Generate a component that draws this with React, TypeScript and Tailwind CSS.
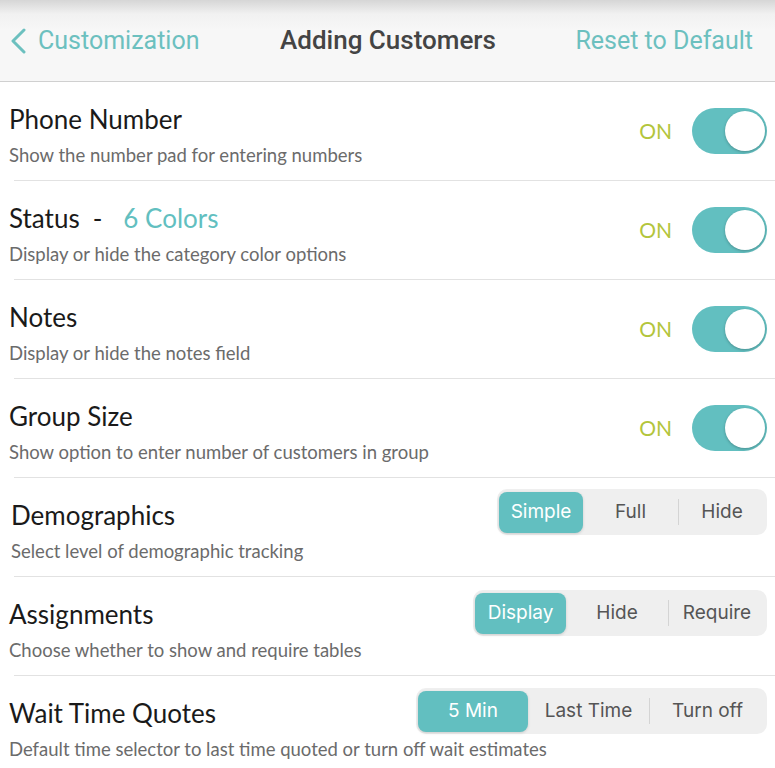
import React from "react";

type ToggleRow = {
  title: React.ReactNode;
  sub: string;
};

type SegRow = {
  title: string;
  sub: string;
  options: string[];
  widths: number[];
  top: string;
  titleInset?: string;
};

const toggles: ToggleRow[] = [
  { title: "Phone Number", sub: "Show the number pad for entering numbers" },
  {
    title: (
      <>
        Status<span className="ml-[13px]">-</span>
        <span className="ml-[21px] text-[#62bfc0]">6 Colors</span>
      </>
    ),
    sub: "Display or hide the category color options",
  },
  { title: "Notes", sub: "Display or hide the notes field" },
  { title: "Group Size", sub: "Show option to enter number of customers in group" },
];

const segs: SegRow[] = [
  { title: "Demographics", sub: "Select level of demographic tracking", options: ["Simple", "Full", "Hide"], widths: [84, 95, 86], top: "mt-[11px]", titleInset: "pl-[11px]" },
  { title: "Assignments", sub: "Choose whether to show and require tables", options: ["Display", "Hide", "Require"], widths: [91, 102, 96], top: "mt-[13px]" },
  { title: "Wait Time Quotes", sub: "Default time selector to last time quoted or turn off wait estimates", options: ["5 Min", "Last Time", "Turn off"], widths: [110, 121, 115], top: "mt-[12px]" },
];

function Switch() {
  return (
    <div className="relative h-[46px] w-[75px] rounded-full bg-[#62bfc0]">
      <div className="absolute right-[2px] top-[3px] h-[40px] w-[40px] rounded-full bg-white shadow-[0_1px_3px_rgba(0,0,0,0.25)]" />
    </div>
  );
}

function Segmented({ options, widths }: { options: string[]; widths: number[] }) {
  return (
    <div className="flex h-[46px] items-center rounded-[10px] bg-[#efefef] p-[2px] font-['Inter',sans-serif] text-[19px] text-[#555]">
      {options.map((o, i) => (
        <React.Fragment key={o}>
          {i === 2 && <div className="h-[26px] w-px bg-[#d4d4d4]" />}
          <div
            style={{ width: widths[i] }}
            className={
              i === 0
                ? "flex h-[41px] items-center justify-center rounded-[8px] bg-[#62bfc0] text-white shadow-[0_1px_3px_rgba(0,0,0,0.15)]"
                : "flex h-[41px] items-center justify-center"
            }
          >
            {o}
          </div>
        </React.Fragment>
      ))}
    </div>
  );
}

function RowText({ title, sub, inset }: { title: React.ReactNode; sub: string; inset?: string }) {
  return (
    <div className={`flex min-w-0 flex-1 flex-col self-start whitespace-nowrap pt-[22px] pl-[9px] ${inset ?? ""}`}>
      <div className="text-[26px] leading-[30px] text-[#1a1a1a]">{title}</div>
      <div className="mt-[10px] text-[18.5px] leading-[22px] text-[#6b6b6b]">{sub}</div>
    </div>
  );
}

export default function App() {
  return (
    <div className="h-[768px] w-[775px] overflow-hidden bg-white font-['Lato',sans-serif]">
      <header className="flex h-[82px] items-center border-b border-[#d0d0d0] bg-[linear-gradient(#d6d6d6_0px,#f1f1f1_14px,#f7f7f7_30px)] font-['Roboto',sans-serif] text-[25px]">
        <div className="flex w-[260px] items-center pl-[10px] text-[#6cc0bf]">
          <svg width="17" height="26" viewBox="0 0 17 26" fill="none">
            <path d="M14 2 L3 13 L14 24" stroke="#6cc0bf" strokeWidth="3" strokeLinecap="round" strokeLinejoin="round" />
          </svg>
          <span className="ml-[11px]">Customization</span>
        </div>
        <div className="flex-1 pl-[20px] text-[26px] font-medium text-[#444]">Adding Customers</div>
        <div className="pr-[22px] text-[#6cc0bf]">Reset to Default</div>
      </header>

      {toggles.map((t, i) => (
        <React.Fragment key={i}>
          <div className="flex h-[98px] items-center">
            <RowText title={t.title} sub={t.sub} />
            <div className="flex items-center pr-[8px]">
              <span className="mr-[20px] text-[21px] text-[#b3c53c]">ON</span>
              <Switch />
            </div>
          </div>
          <div className="ml-[14px] h-px bg-[#e2e2e2]" />
        </React.Fragment>
      ))}

      {segs.map((s, i) => (
        <React.Fragment key={s.title}>
          <div className="flex h-[98px] items-start">
            <RowText title={s.title} sub={s.sub} inset={s.titleInset} />
            <div className={`pr-[8px] ${s.top}`}>
              <Segmented options={s.options} widths={s.widths} />
            </div>
          </div>
          {i < segs.length - 1 && <div className="ml-[14px] h-px bg-[#e2e2e2]" />}
        </React.Fragment>
      ))}
    </div>
  );
}
